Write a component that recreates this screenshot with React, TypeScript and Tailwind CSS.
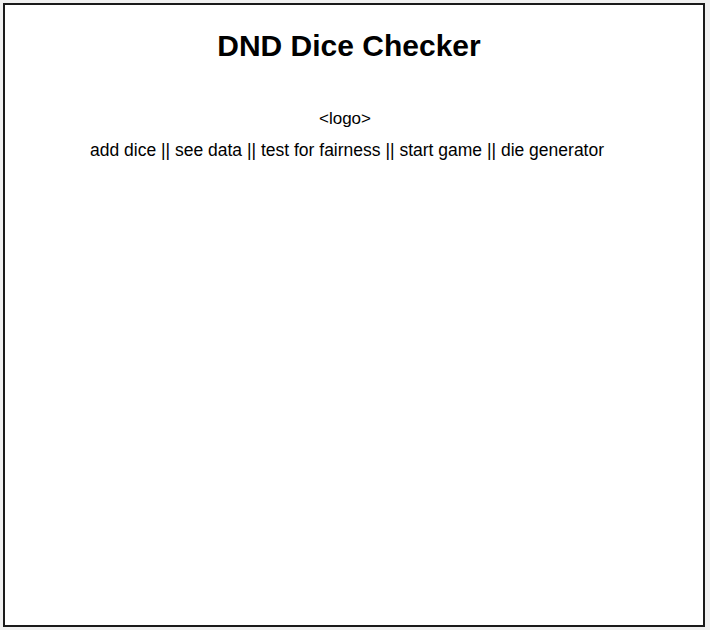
export default function App() {
  const links = ['add dice', 'see data', 'test for fairness', 'start game', 'die generator'];
  return (
    <div className="h-[630px] w-[710px] bg-[#f0f0f0] pl-[3px] pt-[3px] pr-[5px] pb-[3px] font-['Liberation_Sans',Arial,sans-serif] text-black">
      <div className="flex h-full flex-col items-center border-2 border-[#1a1a1a] bg-white pr-[10px]">
        <h1 className="mt-[24px] text-[30px] leading-[34px] font-bold">DND Dice Checker</h1>
        <div className="mt-[46px] pr-[8px] text-[17px] leading-[20px]">&lt;logo&gt;</div>
        <nav className="mt-[10px] pr-[4px] text-[17.5px] leading-[22px]">
          {links.map((l, i) => (
            <span key={l}>
              {i > 0 && ' || '}
              {l}
            </span>
          ))}
        </nav>
      </div>
    </div>
  );
}
